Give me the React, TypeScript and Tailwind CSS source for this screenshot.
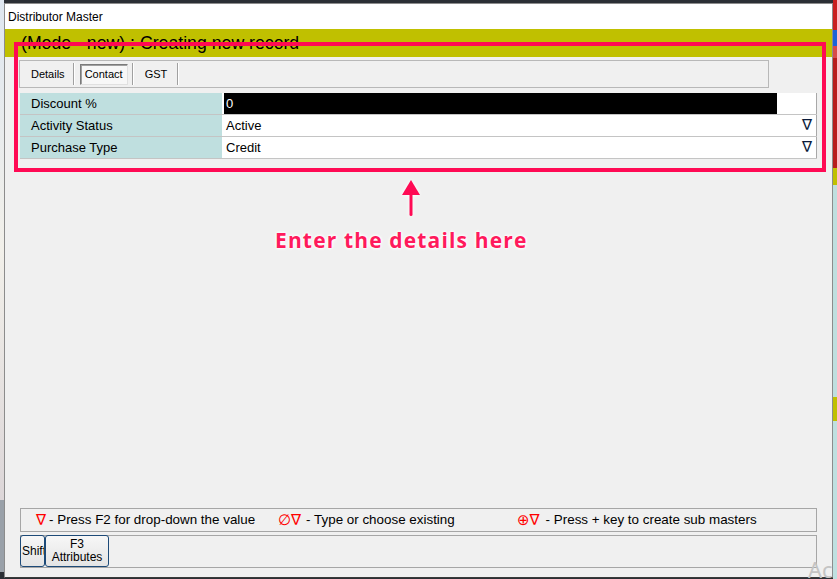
import React from "react";

const sans = { fontFamily: '"Liberation Sans", Arial, sans-serif' };
const sym = { fontFamily: '"DejaVu Sans", sans-serif' };

function Sep() {
  return <div className="w-[2px] h-[22px] border-l border-[#a0a0a0] border-r border-r-white" />;
}

function Row({ label, children }: { label: string; children: React.ReactNode }) {
  return (
    <div className="flex h-[22px] border-b border-[#c4c4c4] bg-white">
      <div className="w-[202px] bg-[#bfdfdf] pl-[11px] flex items-center text-[13px] text-black">{label}</div>
      <div className="ml-[2px] flex-1 flex items-center relative border-r border-[#a8a8a8]">{children}</div>
    </div>
  );
}

export default function App() {
  return (
    <div className="w-[837px] h-[579px] relative overflow-hidden flex bg-[#2b2f35]" style={sans}>
      {/* left desktop strip */}
      <div className="w-[4px] flex flex-col">
        <div className="h-[500px] bg-gradient-to-b from-[#dfe7f0] via-[#f2f0ea] to-[#dcd6d8]" />
        <div className="h-[72px] bg-[#9aa1a9]" />
        <div className="flex-1 bg-[#2b2f35]" />
      </div>

      {/* window */}
      <div className="w-[829px] h-[575px] mt-[3px] flex flex-col border border-[#8c8c8c] border-b-[#3a3a3a] bg-[#f0f0f0]">
        <div className="h-[25px] bg-white flex items-center pl-[3px] text-[12px] text-black">Distributor Master</div>
        <div className="h-[28px] bg-[#c0c000] flex items-center pl-[16px] pt-[1px] text-[17.7px] text-black">
          (Mode - new) : Creating new record
        </div>

        <div className="flex-1 flex flex-col pb-[9px]">
          {/* tabs */}
          <div className="mt-[3px] ml-[14px] w-[750px] h-[28px] border border-[#b8b8b8] flex items-center text-[11px] text-black">
            <span className="pl-[11px] pr-[8px]">Details</span>
            <Sep />
            <div className="ml-[5px] w-[48px] h-[21px] flex items-center justify-center border border-[#7a7a7a] border-r-[#e0e0e0] border-b-[#e0e0e0] bg-[#f7f7f7] shadow-[inset_1px_1px_0_#a0a0a0]">
              Contact
            </div>
            <div className="ml-[4px]"><Sep /></div>
            <span className="pl-[11px] pr-[10px]">GST</span>
            <Sep />
          </div>

          {/* grid */}
          <div className="mt-[5px] ml-[15px] w-[797px] flex flex-col">
            <Row label="Discount %">
              <div className="w-[553px] h-full bg-black text-white text-[13px] flex items-center pl-[2px]">0</div>
            </Row>
            <Row label="Activity Status">
              <span className="pl-[2px] text-[13px] text-black">Active</span>
              <span className="absolute right-[4px] text-[15px] text-[#0a1a3a]" style={sym}>∇</span>
            </Row>
            <Row label="Purchase Type">
              <span className="pl-[2px] text-[13px] text-black">Credit</span>
              <span className="absolute right-[4px] text-[15px] text-[#0a1a3a]" style={sym}>∇</span>
            </Row>
          </div>

          <div className="flex-1" />

          {/* legend */}
          <div className="ml-[15px] w-[797px] h-[24px] border border-[#a6a6a6] flex items-center text-[13.4px] text-black">
            <div className="w-[257px] pl-[15px] flex items-center">
              <span className="text-[#ff0000] text-[15px]" style={sym}>∇</span>
              <span className="ml-[3px]">- Press F2 for drop-down the value</span>
            </div>
            <div className="w-[239px] flex items-center">
              <span className="text-[#ff0000] text-[15px]" style={sym}>∅∇</span>
              <span className="ml-[5px]">- Type or choose existing</span>
            </div>
            <div className="flex items-center">
              <span className="text-[#ff0000] text-[15px]" style={sym}>⊕∇</span>
              <span className="ml-[6px]">- Press + key to create sub masters</span>
            </div>
          </div>

          {/* buttons */}
          <div className="mt-[3px] ml-[15px] w-[797px] h-[33px] border border-[#a6a6a6] flex items-stretch">
            <div className="w-[25px] -ml-px -mt-px h-[32px] rounded-[3px] border border-[#1d4a78] bg-gradient-to-b from-[#f7f7f7] to-[#e4e4e4] flex items-center justify-start pl-px overflow-hidden whitespace-nowrap text-[12px] text-black">
              Shift
            </div>
            <div className="w-[64px] -mt-px h-[32px] rounded-[3px] border border-[#1d4a78] bg-gradient-to-b from-[#f7f7f7] to-[#e4e4e4] flex flex-col items-center justify-center text-[12px] leading-[13px] text-black">
              <span>F3</span>
              <span>Attributes</span>
            </div>
          </div>
        </div>
      </div>

      {/* right desktop strip */}
      <div className="w-[4px] flex flex-col">
        <div className="h-[30px] bg-[#c91f1f]" />
        <div className="h-[16px] bg-[#1c63d8]" />
        <div className="h-[12px] bg-[#d84a4a]" />
        <div className="h-[110px] bg-[#b81c1c]" />
        <div className="h-[17px] bg-[#c0c000]" />
        <div className="h-[212px] bg-[#bfdfdf]" />
        <div className="h-[24px] bg-[#c0c000]" />
        <div className="flex-1 bg-[#bfe0e0]" />
      </div>

      {/* annotation overlay */}
      <div className="absolute left-[14px] top-[42px] w-[812px] h-[130px] border-[4px] border-[#ff0a54]" />
      <svg className="absolute left-[399px] top-[178px]" width="24" height="42" viewBox="0 0 24 42" style={{ filter: "drop-shadow(0 0 2px #ffffff)" }}>
        <polygon points="12,2 21,17 3,17" fill="#ff0a54" />
        <rect x="10.5" y="14" width="3" height="24" rx="1.5" fill="#ff0a54" />
      </svg>
      <div
        className="absolute left-[275px] top-[225px] text-[21px] font-bold text-[#ff1a5c] tracking-[1.15px] whitespace-nowrap"
        style={{ fontFamily: '"Open Sans", sans-serif', textShadow: "0 0 3px #fff, 0 0 3px #fff, 0 0 4px #fff" }}
      >
        Enter the details here
      </div>

      {/* activation watermark */}
      <div className="absolute left-[808px] top-[553px] text-[22px] text-[#c4c4c4] whitespace-nowrap" style={{ fontFamily: '"Noto Sans", sans-serif' }}>
        Ac
      </div>
    </div>
  );
}
